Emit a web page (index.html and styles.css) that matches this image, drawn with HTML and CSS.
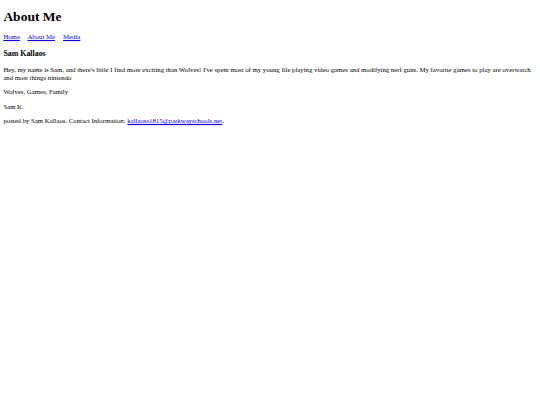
FILE: index.html
```html
<!DOCTYPE html>
<html>
<head>
<meta charset="utf-8">
<title>About Me</title>
<link rel="stylesheet" href="styles.css">
</head>
<body>
<header class="site-header">
<h1 class="title">About Me</h1>
<nav class="nav">
<a class="nav-link" href="#">Home</a>
<a class="nav-link" href="#">About Me</a>
<a class="nav-link" href="#">Media</a>
</nav>
</header>
<main class="content">
<h3 class="name">Sam Kallaos</h3>
<p class="text">Hey, my name is Sam, and there's little I find more exciting than Wolves! I've spent most of my young life playing video games and modifying nerf guns. My favorite games to play are overwatch and most things nintendo</p>
<p class="text">Wolves, Games, Family</p>
<p class="text">Sam K.</p>
</main>
<footer class="footer">
<p class="text">posted by Sam Kallaos. Contact Information: <a class="mail" href="#">kallaoss1815@parkwayschools.net</a>.</p>
</footer>
</body>
</html>
```

FILE: styles.css
```css
html {
  background: #ffffff;
}
body {
  margin: 3.375px;
  font-family: "Liberation Serif", "Times New Roman", serif;
  font-size: 6.75px;
  line-height: 7.76px;
  color: #000000;
}
.title {
  font-size: 13.5px;
  line-height: 15.53px;
  margin: 5.5px 0 9.045px;
}
.nav {
  display: block;
}
.nav-link {
  color: #0000ee;
  margin-right: 6.3px;
}
.name {
  font-size: 7.9px;
  line-height: 9.08px;
  margin: 7.9px 0;
}
.text {
  margin: 6.75px 0;
}
.mail {
  color: #0000ee;
}
```
